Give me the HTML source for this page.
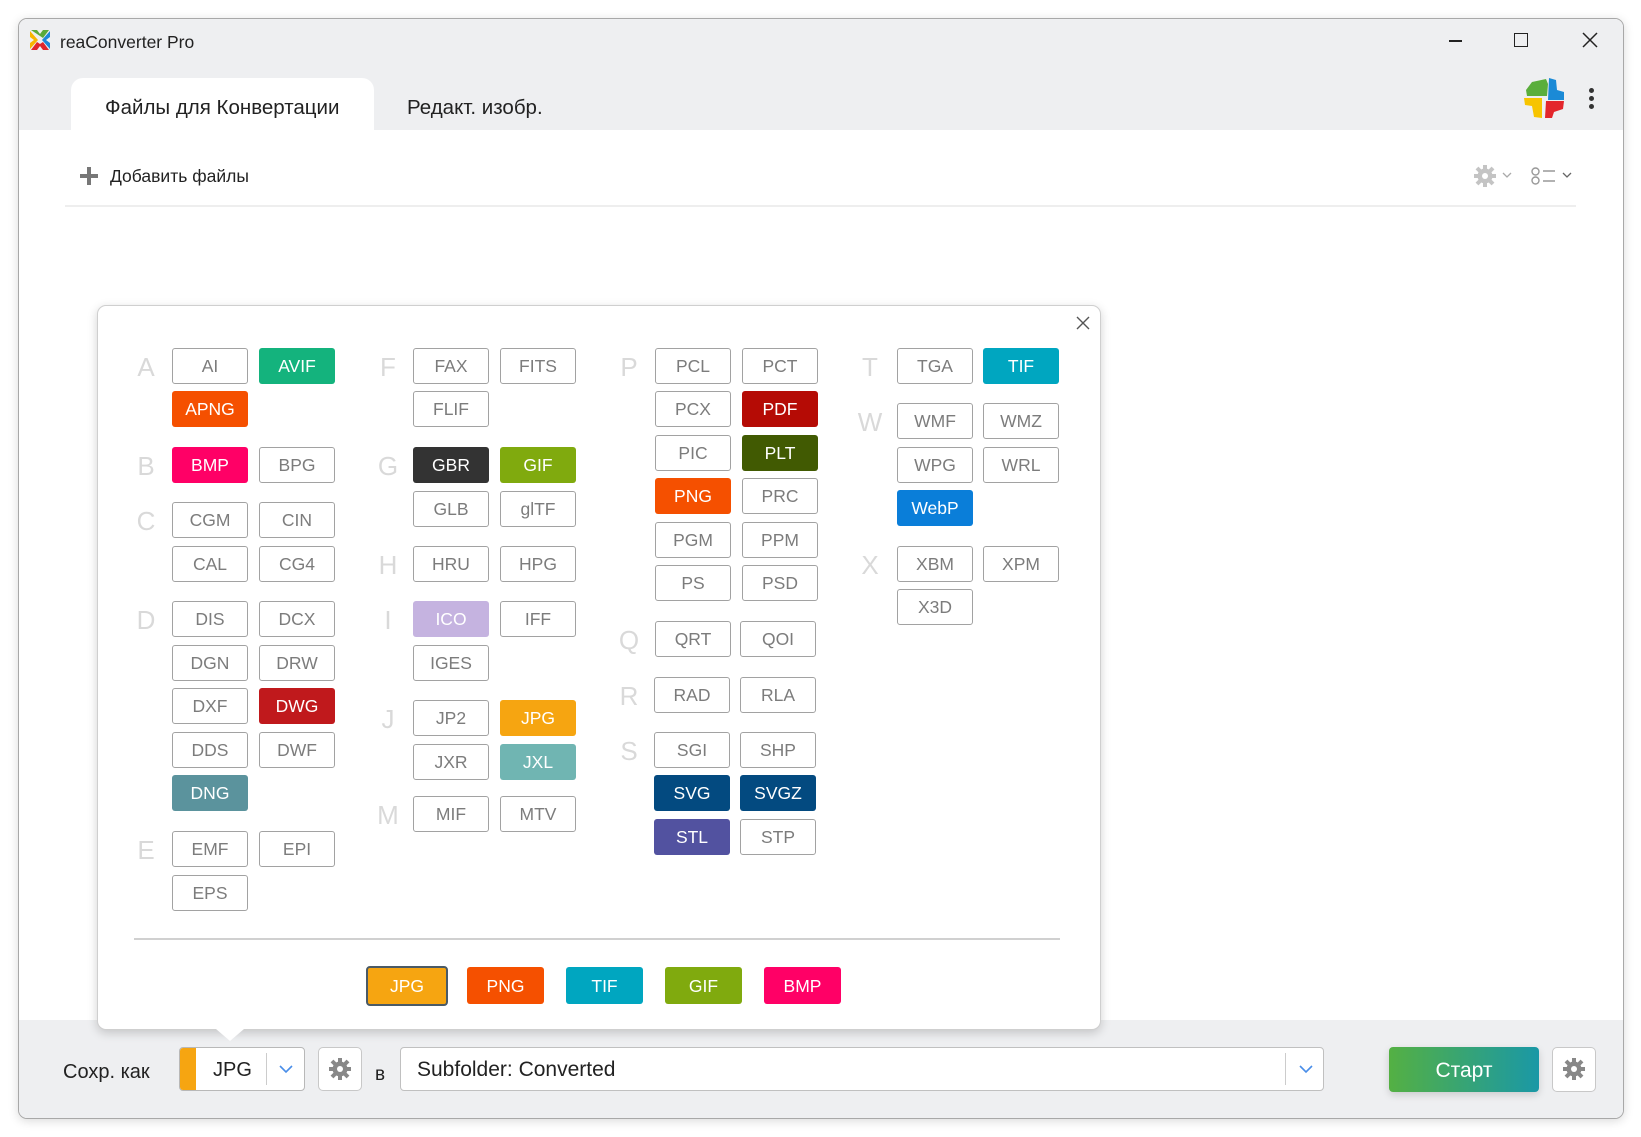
<!DOCTYPE html>
<html><head><meta charset="utf-8">
<style>
*{margin:0;padding:0;box-sizing:border-box}
body{width:1641px;height:1137px;background:#fff;font-family:"Liberation Sans","DejaVu Sans",sans-serif;position:relative;overflow:hidden}
.win{position:absolute;left:18px;top:18px;width:1606px;height:1101px;border:1px solid #a8a8a8;border-radius:9px;background:#fff;overflow:hidden;box-shadow:0 2px 10px rgba(0,0,0,.15)}
.top{position:absolute;left:0;top:0;width:100%;height:111px;background:#eeeff1}
.bot{position:absolute;left:0;top:1001px;width:100%;height:100px;background:#eeeff1}
.abs{position:absolute}
.b{position:absolute;width:76px;height:36px;border:1.5px solid #a2a2a2;border-radius:3px;color:#7c7c7c;font-size:17.5px;line-height:34px;text-align:center;background:#fff}
.c{border:none;color:#fff;line-height:37px}
.L{position:absolute;width:30px;height:36px;line-height:38px;text-align:center;font-size:26px;color:#d9d9d9}
.q{position:absolute;top:967px;width:77px;height:37px;border-radius:3px;color:#fff;font-size:17.5px;line-height:38px;text-align:center}
</style></head><body>
<div class="win">
 <div class="top"></div>
 <div class="bot"></div>
</div>
<!-- title bar -->
<svg class="abs" style="left:28px;top:28px" width="24" height="24" viewBox="0 0 24 24">
 <path d="M3 2 L9 2 L12 6 L15 2 L21 2 L15 10 Z" fill="#5aaa3a"/>
 <path d="M2 3 L2 9 L6 12 L2 15 L2 21 L10 12 Z" fill="#f7b500"/>
 <path d="M22 3 L22 9 L18 12 L22 15 L22 21 L14 12 Z" fill="#1e88d8"/>
 <path d="M3 22 L9 22 L12 18 L15 22 L21 22 L15 14 L12 16 L9 14 Z" fill="#e0262b"/>
</svg>
<div class="abs" style="left:60px;top:32px;font-size:17.5px;color:#222">reaConverter Pro</div>
<div class="abs" style="left:1449px;top:40px;width:13px;height:1.5px;background:#222"></div>
<div class="abs" style="left:1514px;top:33px;width:14px;height:14px;border:1.5px solid #222"></div>
<svg class="abs" style="left:1582px;top:32px" width="16" height="16"><path d="M1 1L15 15M15 1L1 15" stroke="#222" stroke-width="1.5"/></svg>
<!-- tabs -->
<div class="abs" style="left:71px;top:78px;width:303px;height:60px;background:#fff;border:none;border-radius:12px 12px 0 0"></div>
<div class="abs" style="left:105px;top:96px;font-size:20.5px;color:#222">Файлы для Конвертации</div>
<div class="abs" style="left:407px;top:96px;font-size:20.5px;color:#222">Редакт. изобр.</div>
<svg class="abs" style="left:1522px;top:76px" width="44" height="44" viewBox="0 0 44 44">
 <path d="M10 6 L24 3 L26 8 L25 20 L5 20 L4 14 Z" fill="#5aae3c"/>
 <path d="M27 2 L34 4 L35 14 L42 16 L42 24 L26 24 Z" fill="#1b8ad6"/>
 <path d="M2 22 L20 22 L20 42 L12 41 L10 30 L3 29 Z" fill="#f7c400"/>
 <path d="M24 25 L42 25 L41 33 L32 36 L30 42 L23 42 Z" fill="#e3262c"/>
</svg>
<div class="abs" style="left:1589px;top:88px;width:5px;height:5px;border-radius:50%;background:#333"></div>
<div class="abs" style="left:1589px;top:96px;width:5px;height:5px;border-radius:50%;background:#333"></div>
<div class="abs" style="left:1589px;top:104px;width:5px;height:5px;border-radius:50%;background:#333"></div>
<!-- toolbar -->
<div class="abs" style="left:80px;top:174px;width:18px;height:4px;background:#777"></div>
<div class="abs" style="left:87px;top:167px;width:4px;height:18px;background:#777"></div>
<div class="abs" style="left:110px;top:166px;font-size:17.5px;color:#222">Добавить файлы</div>
<div class="abs" style="left:65px;top:205px;width:1511px;height:1.5px;background:#eeeeee"></div>
<svg class="abs" style="left:1473px;top:164px" width="24" height="24" viewBox="0 0 24 24"><circle cx="12" cy="12" r="7.5" fill="#c4c4c4"/><g stroke="#c4c4c4" stroke-width="4"><path d="M12 1v22M1 12h22M4 4l16 16M20 4L4 20"/></g><circle cx="12" cy="12" r="3" fill="#fff"/></svg>
<svg class="abs" style="left:1502px;top:172px" width="10" height="7"><path d="M1 1L5 5L9 1" stroke="#aaa" fill="none" stroke-width="1.3"/></svg>
<svg class="abs" style="left:1531px;top:167px" width="26" height="18"><circle cx="4.5" cy="4.5" r="3.5" stroke="#999" fill="none" stroke-width="1.4"/><circle cx="4.5" cy="13.5" r="3.5" stroke="#999" fill="none" stroke-width="1.4"/><path d="M12 4h12M12 14h12" stroke="#999" stroke-width="1.4"/></svg>
<svg class="abs" style="left:1562px;top:172px" width="10" height="7"><path d="M1 1L5 5L9 1" stroke="#666" fill="none" stroke-width="1.3"/></svg>

<!-- panel -->
<div class="abs" style="left:97px;top:305px;width:1004px;height:725px;background:#fff;border:1px solid #cfcfcf;border-radius:9px;box-shadow:0 3px 10px rgba(0,0,0,.18)"></div>
<svg class="abs" style="left:216px;top:1029px" width="28" height="13"><path d="M0 0 L14 12 L28 0 Z" fill="#fff"/></svg>
<svg class="abs" style="left:1076px;top:316px" width="14" height="14"><path d="M1 1L13 13M13 1L1 13" stroke="#555" stroke-width="1.4"/></svg>

<!-- letters -->
<div class="L" style="left:131px;top:348px">A</div>
<div class="L" style="left:131px;top:447px">B</div>
<div class="L" style="left:131px;top:502px">C</div>
<div class="L" style="left:131px;top:601px">D</div>
<div class="L" style="left:131px;top:831px">E</div>
<div class="L" style="left:373px;top:348px">F</div>
<div class="L" style="left:373px;top:447px">G</div>
<div class="L" style="left:373px;top:546px">H</div>
<div class="L" style="left:373px;top:601px">I</div>
<div class="L" style="left:373px;top:700px">J</div>
<div class="L" style="left:373px;top:796px">M</div>
<div class="L" style="left:614px;top:348px">P</div>
<div class="L" style="left:614px;top:621px">Q</div>
<div class="L" style="left:614px;top:677px">R</div>
<div class="L" style="left:614px;top:732px">S</div>
<div class="L" style="left:855px;top:348px">T</div>
<div class="L" style="left:855px;top:403px">W</div>
<div class="L" style="left:855px;top:546px">X</div>

<!-- col1 -->
<div class="b" style="left:172px;top:348px">AI</div>
<div class="b c" style="left:259px;top:348px;background:#14b37d">AVIF</div>
<div class="b c" style="left:172px;top:391px;background:#f55000">APNG</div>
<div class="b c" style="left:172px;top:447px;background:#ff0066">BMP</div>
<div class="b" style="left:259px;top:447px">BPG</div>
<div class="b" style="left:172px;top:502px">CGM</div>
<div class="b" style="left:259px;top:502px">CIN</div>
<div class="b" style="left:172px;top:546px">CAL</div>
<div class="b" style="left:259px;top:546px">CG4</div>
<div class="b" style="left:172px;top:601px">DIS</div>
<div class="b" style="left:259px;top:601px">DCX</div>
<div class="b" style="left:172px;top:645px">DGN</div>
<div class="b" style="left:259px;top:645px">DRW</div>
<div class="b" style="left:172px;top:688px">DXF</div>
<div class="b c" style="left:259px;top:688px;background:#c0191c">DWG</div>
<div class="b" style="left:172px;top:732px">DDS</div>
<div class="b" style="left:259px;top:732px">DWF</div>
<div class="b c" style="left:172px;top:775px;background:#5b939d">DNG</div>
<div class="b" style="left:172px;top:831px">EMF</div>
<div class="b" style="left:259px;top:831px">EPI</div>
<div class="b" style="left:172px;top:875px">EPS</div>
<!-- col2 -->
<div class="b" style="left:413px;top:348px">FAX</div>
<div class="b" style="left:500px;top:348px">FITS</div>
<div class="b" style="left:413px;top:391px">FLIF</div>
<div class="b c" style="left:413px;top:447px;background:#333">GBR</div>
<div class="b c" style="left:500px;top:447px;background:#80aa0e">GIF</div>
<div class="b" style="left:413px;top:491px">GLB</div>
<div class="b" style="left:500px;top:491px">glTF</div>
<div class="b" style="left:413px;top:546px">HRU</div>
<div class="b" style="left:500px;top:546px">HPG</div>
<div class="b c" style="left:413px;top:601px;background:#c5b3e0">ICO</div>
<div class="b" style="left:500px;top:601px">IFF</div>
<div class="b" style="left:413px;top:645px">IGES</div>
<div class="b" style="left:413px;top:700px">JP2</div>
<div class="b c" style="left:500px;top:700px;background:#f6a511">JPG</div>
<div class="b" style="left:413px;top:744px">JXR</div>
<div class="b c" style="left:500px;top:744px;background:#70b5b2">JXL</div>
<div class="b" style="left:413px;top:796px">MIF</div>
<div class="b" style="left:500px;top:796px">MTV</div>
<!-- col3 -->
<div class="b" style="left:655px;top:348px">PCL</div>
<div class="b" style="left:742px;top:348px">PCT</div>
<div class="b" style="left:655px;top:391px">PCX</div>
<div class="b c" style="left:742px;top:391px;background:#b50b05">PDF</div>
<div class="b" style="left:655px;top:435px">PIC</div>
<div class="b c" style="left:742px;top:435px;background:#415a02">PLT</div>
<div class="b c" style="left:655px;top:478px;background:#f55000">PNG</div>
<div class="b" style="left:742px;top:478px">PRC</div>
<div class="b" style="left:655px;top:522px">PGM</div>
<div class="b" style="left:742px;top:522px">PPM</div>
<div class="b" style="left:655px;top:565px">PS</div>
<div class="b" style="left:742px;top:565px">PSD</div>
<div class="b" style="left:655px;top:621px">QRT</div>
<div class="b" style="left:740px;top:621px">QOI</div>
<div class="b" style="left:654px;top:677px">RAD</div>
<div class="b" style="left:740px;top:677px">RLA</div>
<div class="b" style="left:654px;top:732px">SGI</div>
<div class="b" style="left:740px;top:732px">SHP</div>
<div class="b c" style="left:654px;top:775px;background:#034a80">SVG</div>
<div class="b c" style="left:740px;top:775px;background:#034a80">SVGZ</div>
<div class="b c" style="left:654px;top:819px;background:#5252a0">STL</div>
<div class="b" style="left:740px;top:819px">STP</div>
<!-- col4 -->
<div class="b" style="left:897px;top:348px">TGA</div>
<div class="b c" style="left:983px;top:348px;background:#00a6c0">TIF</div>
<div class="b" style="left:897px;top:403px">WMF</div>
<div class="b" style="left:983px;top:403px">WMZ</div>
<div class="b" style="left:897px;top:447px">WPG</div>
<div class="b" style="left:983px;top:447px">WRL</div>
<div class="b c" style="left:897px;top:490px;background:#0a7ed9">WebP</div>
<div class="b" style="left:897px;top:546px">XBM</div>
<div class="b" style="left:983px;top:546px">XPM</div>
<div class="b" style="left:897px;top:589px">X3D</div>

<div class="abs" style="left:134px;top:938px;width:926px;height:2px;background:#d0d0d0"></div>
<div class="q" style="left:366px;top:966px;width:82px;height:40px;background:#f6a511;border:2.5px solid #4a5a66;border-radius:4px;line-height:36px">JPG</div>
<div class="q" style="left:467px;background:#f55000">PNG</div>
<div class="q" style="left:566px;background:#00a6c0">TIF</div>
<div class="q" style="left:665px;background:#80aa0e">GIF</div>
<div class="q" style="left:764px;background:#ff0066">BMP</div>

<!-- bottom bar -->
<div class="abs" style="left:63px;top:1061px;font-size:20px;color:#222">Сохр. как</div>
<div class="abs" style="left:179px;top:1047px;width:126px;height:44px;background:#fff;border:1px solid #b8b8b8;border-radius:4px;overflow:hidden">
 <div class="abs" style="left:0;top:0;width:16px;height:44px;background:#f6a511"></div>
 <div class="abs" style="left:33px;top:11px;font-size:20px;color:#222">JPG</div>
 <div class="abs" style="left:86px;top:5px;width:1px;height:32px;background:#ccc"></div>
 <svg class="abs" style="left:99px;top:17px" width="14" height="9"><path d="M1 1L7 7L13 1" stroke="#4a8ee8" fill="none" stroke-width="1.6"/></svg>
</div>
<div class="abs" style="left:318px;top:1047px;width:44px;height:44px;background:#fff;border:1px solid #c8c8c8;border-radius:5px"></div>
<svg class="abs" style="left:328px;top:1057px" width="24" height="24" viewBox="0 0 24 24"><circle cx="12" cy="12" r="7.5" fill="#888"/><g stroke="#888" stroke-width="4"><path d="M12 1v22M1 12h22M4 4l16 16M20 4L4 20"/></g><circle cx="12" cy="12" r="3" fill="#fff"/></svg>
<div class="abs" style="left:375px;top:1064px;font-size:19px;color:#222">в</div>
<div class="abs" style="left:400px;top:1047px;width:924px;height:44px;background:#fff;border:1px solid #c0c0c0;border-radius:4px">
 <div class="abs" style="left:16px;top:10px;font-size:21px;color:#222">Subfolder: Converted</div>
 <div class="abs" style="left:884px;top:5px;width:1px;height:32px;background:#ccc"></div>
 <svg class="abs" style="left:898px;top:17px" width="14" height="9"><path d="M1 1L7 7L13 1" stroke="#4a8ee8" fill="none" stroke-width="1.6"/></svg>
</div>
<div class="abs" style="left:1389px;top:1047px;width:150px;height:45px;border-radius:4px;background:linear-gradient(90deg,#54b043,#1a98a6);box-shadow:0 3px 8px rgba(0,0,0,.15);color:#fff;font-size:21px;line-height:47px;text-align:center">Старт</div>
<div class="abs" style="left:1552px;top:1047px;width:44px;height:45px;background:#fff;border:1px solid #c8c8c8;border-radius:5px"></div>
<svg class="abs" style="left:1562px;top:1057px" width="24" height="24" viewBox="0 0 24 24"><circle cx="12" cy="12" r="7.5" fill="#888"/><g stroke="#888" stroke-width="4"><path d="M12 1v22M1 12h22M4 4l16 16M20 4L4 20"/></g><circle cx="12" cy="12" r="3" fill="#fff"/></svg>
</body></html>
